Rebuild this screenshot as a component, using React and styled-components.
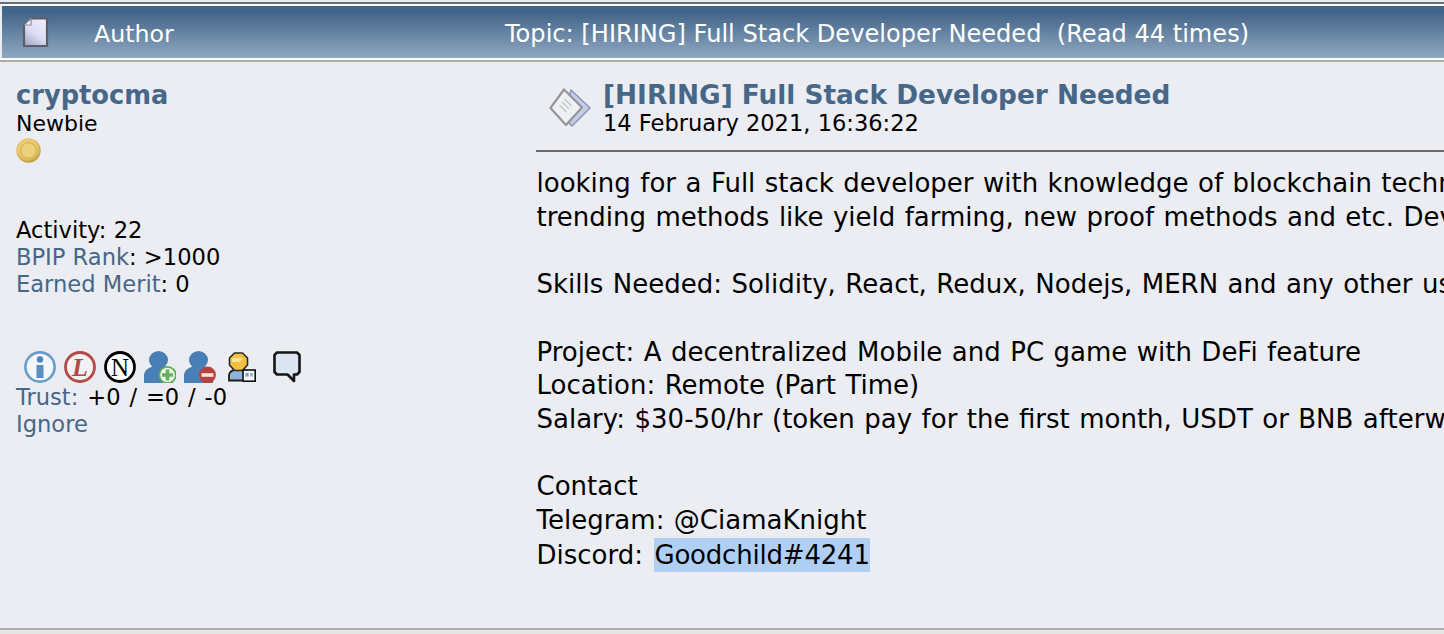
import React from "react";
import styled, { createGlobalStyle } from "styled-components";

const Global = createGlobalStyle`
  html, body { margin: 0; padding: 0; background: #fff; overflow: hidden; }
`;

const Page = styled.div`
  width: 1444px;
  height: 634px;
  overflow: hidden;
  display: flex;
  flex-direction: column;
  background: #ebedf3;
  color: #000;
  font-family: "DejaVu Sans", Verdana, sans-serif;
`;

const TopRule = styled.div`
  flex: none;
  box-sizing: border-box;
  margin-top: 2px;
  height: 4px;
  background: #fff;
  border-top: 2px solid #6e6e6e;
`;

const Header = styled.div`
  height: 52px;
  flex: none;
  margin-left: 2px;
  padding-top: 3px;
  box-sizing: border-box;
  display: flex;
  align-items: center;
  background: linear-gradient(#43658a 0, #43658a 12%, #8fa8c0 100%);
  color: #fff;
  line-height: 30px;
`;

const HeaderIconCell = styled.div`
  width: 92px;
  padding: 0 0 2px 20px;
  box-sizing: border-box;
  display: flex;
`;

const AuthorCell = styled.div`
  width: 411px;
  font-size: 23.7px;
`;

const TopicCell = styled.div`
  white-space: pre;
  font-size: 24.1px;
`;

const HeaderRule = styled.div`
  height: 4px;
  flex: none;
  background: #fff;
  border-bottom: 2px solid #adadad;
  box-sizing: border-box;
`;

const Body = styled.div`
  flex: 1;
  display: flex;
  min-height: 0;
`;

const Poster = styled.div`
  width: 536px;
  flex: none;
  padding: 18px 0 0 16px;
  box-sizing: border-box;
  font-size: 22.6px;
`;

const Name = styled.div`
  font-weight: bold;
  font-size: 25.7px;
  line-height: 30px;
  color: #476788;
`;

const Line = styled.div`
  white-space: pre;
  line-height: 27px;
  word-spacing: ${(p) => p.$wordGap || 0}px;
`;

const Rank = styled(Line)`
  font-size: 22px;
`;

const Lnk = styled.span`
  color: #476788;
`;

const Coin = styled.div`
  height: 27px;
  display: flex;
  align-items: center;
`;

const Spacer = styled.div`
  height: ${(p) => p.$h}px;
`;

const IconRow = styled.div`
  display: flex;
  align-items: flex-start;
  height: 34px;
  box-sizing: border-box;
  padding: 1px 0 0 8px;
  gap: 8px;
`;

const IconSlot = styled.span`
  display: flex;
  margin-left: ${(p) => p.$left}px;
  margin-top: ${(p) => p.$top || 0}px;
`;

const Main = styled.div`
  flex: 1;
  min-width: 0;
`;

const SubjectRow = styled.div`
  display: flex;
  align-items: center;
  height: 90px;
  padding: 4px 0 0 13px;
  box-sizing: border-box;
  border-bottom: 2px solid #6a6a6a;
  margin-bottom: 15px;
`;

const Subject = styled.div`
  margin-left: 12px;
`;

const Title = styled.div`
  font-weight: bold;
  font-size: 26.35px;
  line-height: 30px;
  color: #476788;
  white-space: nowrap;
`;

const DateLine = styled.div`
  font-size: 22.55px;
  line-height: 27px;
  white-space: nowrap;
`;

const Post = styled.div`
  white-space: pre;
  font-size: 26px;
  word-spacing: 1.2px;
  line-height: 33.7px;
  padding-left: 0.5px;
`;

const Selected = styled.span`
  display: inline-block;
  background: #b0cff5;
  line-height: 34px;
  margin-left: 2px;
  letter-spacing: -0.2px;
`;

const BottomRule = styled.div`
  height: 6px;
  flex: none;
  background: #e6e6e6;
  border-top: 2px solid #adadad;
  box-sizing: border-box;
`;

const DocIcon = () => (
  <svg width="27" height="31" viewBox="0 0 27 31">
    <defs>
      <linearGradient id="doc" x1="0.8" y1="0" x2="0.2" y2="1">
        <stop offset="0" stopColor="#eeeefe" />
        <stop offset="0.55" stopColor="#dcdcf4" />
        <stop offset="1" stopColor="#a9a9c8" />
      </linearGradient>
    </defs>
    <path d="M9 1.5H25V29H2V8Z" fill="url(#doc)" stroke="#5d5d66" strokeWidth="2.2" strokeLinejoin="round" />
    <path d="M9 1.5V8H2Z" fill="#f6f6fa" stroke="#8a8a90" strokeWidth="1.2" strokeLinejoin="round" />
  </svg>
);

const CoinIcon = () => (
  <svg width="25" height="25" viewBox="0 0 25 25">
    <defs>
      <radialGradient id="coin" cx="0.45" cy="0.4" r="0.6">
        <stop offset="0" stopColor="#f4d98a" />
        <stop offset="0.7" stopColor="#e6c565" />
        <stop offset="1" stopColor="#bf9b45" />
      </radialGradient>
    </defs>
    <circle cx="12.5" cy="12.5" r="12.2" fill="url(#coin)" />
    <circle cx="12.5" cy="12.5" r="7.8" fill="#ecd07a" stroke="#cfac50" strokeWidth="1" />
  </svg>
);

const InfoIcon = () => (
  <svg width="32" height="32" viewBox="0 0 32 32">
    <circle cx="16" cy="16" r="14.6" fill="#f3f6fb" stroke="#6a9cc8" strokeWidth="2.6" />
    <circle cx="16" cy="8.5" r="3.2" fill="#4f87b8" />
    <rect x="12.5" y="14" width="7" height="13" fill="#5a90c0" />
  </svg>
);

const LetterCircle = ({ ring, fill, letter, color, italic, weight, size }) => (
  <svg width="32" height="32" viewBox="0 0 32 32">
    <circle cx="16" cy="16" r="14.5" fill={fill} stroke={ring} strokeWidth="2.8" />
    <text
      x="16"
      y="24.5"
      textAnchor="middle"
      fontFamily="Liberation Serif, serif"
      fontWeight={weight}
      fontStyle={italic ? "italic" : "normal"}
      fontSize={size}
      fill={color}
    >
      {letter}
    </text>
  </svg>
);

const Person = () => (
  <>
    <ellipse cx="14.5" cy="9" rx="9.5" ry="9" fill="#4a7fb5" />
    <path d="M0 32V24C0 19 6 16 10 15H19C24 16 29 19 29 24V32Z" fill="#4a7fb5" />
  </>
);

const AddIcon = () => (
  <svg width="32" height="32" viewBox="0 0 32 32">
    <Person />
    <circle cx="23.5" cy="24" r="8.2" fill="#eef5ea" stroke="#5fae58" strokeWidth="1.8" />
    <path d="M23.5 18.5V29.5M18 24H29" stroke="#63b25a" strokeWidth="3.6" />
  </svg>
);

const RemoveIcon = () => (
  <svg width="32" height="32" viewBox="0 0 32 32">
    <Person />
    <circle cx="23.5" cy="24" r="8.4" fill="#b5423f" />
    <path d="M17.5 24H29.5" stroke="#f3e6e2" strokeWidth="3.6" />
  </svg>
);

const CardIcon = () => (
  <svg width="28" height="30" viewBox="0 0 28 30">
    <path d="M1 28.5V23C1 20 5 17 11 17S20 20 20 23V28.5Z" fill="#8fb2d8" stroke="#1d1d1d" strokeWidth="1.8" />
    <path d="M6.5 1H14.5L19.5 6V13L14.5 18.5H6.5L1.5 13V6Z" fill="#f0c040" stroke="#2a2a2a" strokeWidth="1.6" strokeLinejoin="round" />
    <path d="M4 6H15L12 10H4Z" fill="#f8e29a" />
    <rect x="15" y="18" width="12.2" height="11.2" fill="#f4f6f8" stroke="#111" strokeWidth="1.6" />
    <rect x="17.6" y="21" width="3" height="3.5" fill="#6f9cc8" />
    <rect x="22" y="21" width="3" height="3.5" fill="#9db6cc" />
  </svg>
);

const BubbleIcon = () => (
  <svg width="28" height="32" viewBox="0 0 28 32">
    <path
      d="M4 1.5H24L26.5 4V21L24 23.5H21V30L14.5 23.5H4L1.5 21V4Z"
      fill="#dbe6f1"
      stroke="#151515"
      strokeWidth="2.6"
      strokeLinejoin="round"
    />
  </svg>
);

const PostIcon = () => (
  <svg width="42" height="40" viewBox="0 0 42 40">
    <path d="M22 2L41 20L23 38L15 30Z" fill="#c4cdec" stroke="#8e97b8" strokeWidth="1.6" strokeLinejoin="round" />
    <path d="M15 1.5L33 19.5L17 37L1.5 20Z" fill="#eef0f4" stroke="#969696" strokeWidth="2.2" strokeLinejoin="round" />
    <path d="M13 14L20 21M10.5 17L17.5 24M15.5 11L22.5 18" stroke="#c3c6cc" strokeWidth="1.4" />
  </svg>
);

export default function App() {
  return (
    <Page>
      <Global />
      <TopRule />
      <Header>
        <HeaderIconCell><DocIcon /></HeaderIconCell>
        <AuthorCell>Author</AuthorCell>
        <TopicCell>Topic: [HIRING] Full Stack Developer Needed  (Read 44 times)</TopicCell>
      </Header>
      <HeaderRule />
      <Body>
        <Poster>
          <Name>cryptocma</Name>
          <Rank>Newbie</Rank>
          <Coin><CoinIcon /></Coin>
          <Spacer $h={53} />
          <Line>Activity: 22</Line>
          <Line><Lnk>BPIP Rank</Lnk>: &gt;1000</Line>
          <Line><Lnk>Earned Merit</Lnk>: 0</Line>
          <Spacer $h={52} />
          <IconRow>
            <InfoIcon />
            <LetterCircle ring="#b24a46" fill="#f1f2f6" letter="L" color="#b24a46" italic weight="bold" size="26" />
            <LetterCircle ring="#000" fill="#fff" letter="N" color="#000" weight="normal" size="25" />
            <AddIcon />
            <RemoveIcon />
            <IconSlot $left={4} $top={1}><CardIcon /></IconSlot>
            <IconSlot $left={9}><BubbleIcon /></IconSlot>
          </IconRow>
          <Line $wordGap={1.7}><Lnk>Trust:</Lnk> +0 / =0 / -0</Line>
          <Line><Lnk>Ignore</Lnk></Line>
        </Poster>
        <Main>
          <SubjectRow>
            <PostIcon />
            <Subject>
              <Title>[HIRING] Full Stack Developer Needed</Title>
              <DateLine>14 February 2021, 16:36:22</DateLine>
            </Subject>
          </SubjectRow>
          <Post>{`looking for a Full stack developer with knowledge of blockchain technology
trending methods like yield farming, new proof methods and etc. Developer
 
Skills Needed: Solidity, React, Redux, Nodejs, MERN and any other useful skills
 
Project: A decentralized Mobile and PC game with DeFi feature
Location: Remote (Part Time)
Salary: $30-50/hr (token pay for the first month, USDT or BNB afterwards)
 
Contact
Telegram: @CiamaKnight
Discord: `}<Selected>Goodchild#4241</Selected></Post>
        </Main>
      </Body>
      <BottomRule />
    </Page>
  );
}
